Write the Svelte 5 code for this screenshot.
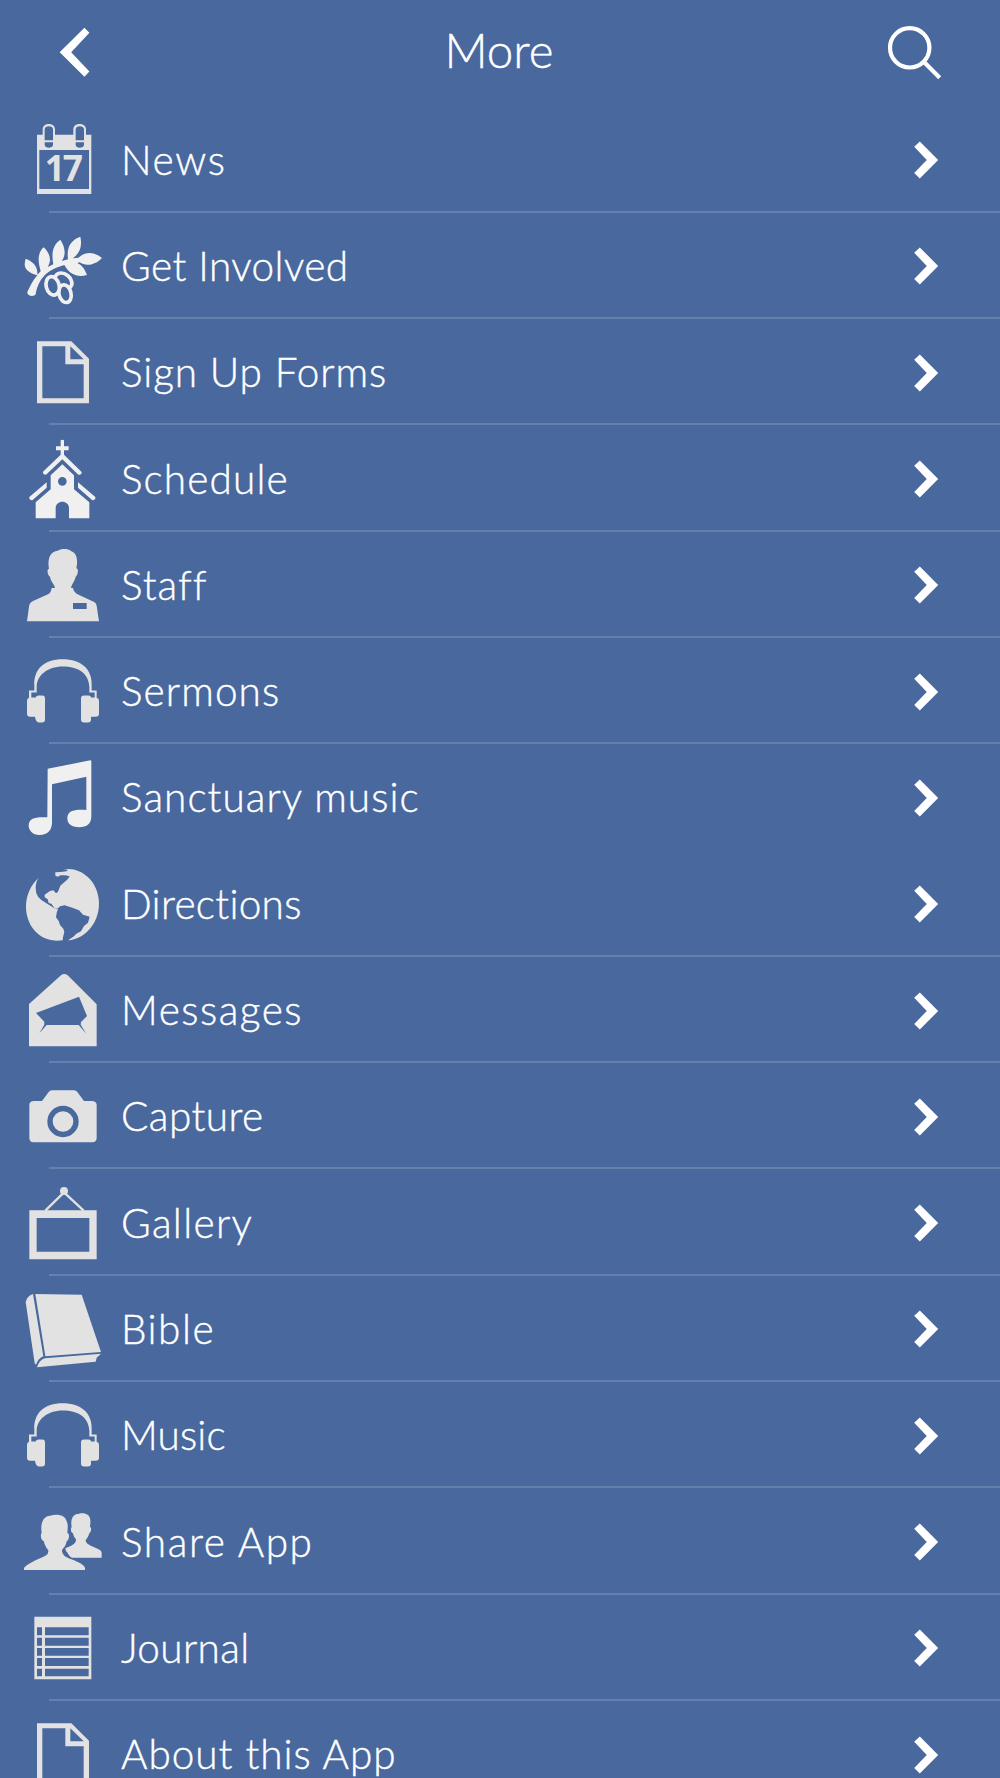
<script lang="ts">
    type Item = { label: string; icon: string; spacing: number };

    const items: Item[] = [
        { label: "News", icon: "calendar", spacing: 1.6 },
        { label: "Get Involved", icon: "olive", spacing: 0.45 },
        { label: "Sign Up Forms", icon: "page", spacing: 0.9 },
        { label: "Schedule", icon: "church", spacing: 1.15 },
        { label: "Staff", icon: "person", spacing: 1 },
        { label: "Sermons", icon: "headphones", spacing: 1.1 },
        { label: "Sanctuary music", icon: "note", spacing: 1.05 },
        { label: "Directions", icon: "globe", spacing: 0.3 },
        { label: "Messages", icon: "mail", spacing: 1.5 },
        { label: "Capture", icon: "camera", spacing: 0.45 },
        { label: "Gallery", icon: "frame", spacing: 1.35 },
        { label: "Bible", icon: "book", spacing: 1.5 },
        { label: "Music", icon: "headphones", spacing: 0.15 },
        { label: "Share App", icon: "people", spacing: 1.6 },
        { label: "Journal", icon: "journal", spacing: 0.35 },
        { label: "About this App", icon: "page", spacing: 1 },
    ];

    // Every icon is drawn on a 252 unit square
    const viewBoxes: Record<string, string> = {
        calendar: "30 21 252 252",
        olive: "30 340 252 252",
        page: "30 29 252 252",
        church: "30 348 252 252",
        person: "30 37 252 252",
        headphones: "30 355.5 252 252",
        note: "30 44 252 252",
        globe: "30 363 252 252",
        mail: "30 22 252 252",
        camera: "30 341 252 252",
        frame: "30 30 252 252",
        book: "30 349 252 252",
        people: "30 27 252 252",
        journal: "30 346 252 252",
    };

    const bright = ["olive", "church", "note"];
</script>

<div class="screen">
    <header>
        <button aria-label="Back">
            <svg width="34" height="52" viewBox="0 0 34 52">
                <path d="M28.4 1.7 33.4 6.8 15.2 26.2 33.4 45.6 28.4 50.8 3.7 26.2Z" />
            </svg>
        </button>
        <h1>More</h1>
        <button aria-label="Search">
            <svg width="56" height="56" viewBox="0 0 56 56" class="search">
                <circle cx="23.7" cy="23.8" r="19.7" />
                <path d="M38 38 53.7 53.7" />
            </svg>
        </button>
    </header>

    <ul>
        {#each items as item}
            <li class:last={item.label === "Sanctuary music"}>
                <svg
                    class="icon"
                    class:bright={bright.includes(item.icon)}
                    viewBox={viewBoxes[item.icon]}
                >
                    {#if item.icon === "calendar"}
                        <path
                            fill-rule="evenodd"
                            d="M81 71H98V55C98 34 135 34 135 55V71H190V55C190 34 228 34 228 55V71H244V249H81ZM88 117V234H237V117ZM104 88H129V55C129 43 104 43 104 55ZM197 88H222V55C222 43 197 43 197 55ZM104 94V101C104 113 129 113 129 101V94ZM197 94V101C197 113 222 113 222 101V94Z"
                        />
                        <text x="104 158" y="210">17</text>
                    {:else if item.icon === "olive"}
                        <path
                            d="M52 544C61 525 70 507 82 494C38 480 42 462 47 444C68 452 84 466 82 492L92 482C82 447 84 425 101 410C120 428 126 448 113 469L130 461C123 425 130 401 151 387C168 412 167 437 155 451L174 446C169 411 181 389 211 378C217 405 211 428 188 443L205 441C225 423 251 422 276 442C256 464 226 468 209 455L202 457C217 464 225 477 231 493C202 501 178 491 163 463C112 477 86 502 77 551C72 560 50 557 52 544Z"
                        />
                        <g class="ring">
                            <ellipse cx="160" cy="511" rx="28" ry="21" transform="rotate(38 160 511)" />
                            <ellipse cx="165" cy="549" rx="18" ry="27" transform="rotate(-14 165 549)" />
                            <ellipse cx="128" cy="525.5" rx="19.5" ry="28" transform="rotate(-14 128 525.5)" />
                        </g>
                    {:else if item.icon === "page"}
                        <path
                            fill-rule="evenodd"
                            d="M81 63H184L237 115V249H81ZM97 78V234H221V132H166V78ZM181 78V117H221Z"
                        />
                    {:else if item.icon === "church"}
                        <path
                            d="M152 358Q157 354 162 358V376H176V388H162V401L215 453Q215 463 205 461L157 415 108 461Q98 461 99 452L152 401V388H138V376H152Z"
                        />
                        <path d="M110 484V500L67 538Q56 537 58 528ZM204 484V500L247 538Q258 537 256 528Z" />
                        <path
                            fill-rule="evenodd"
                            d="M157 430 192 463V505L238 544V592H177V562C177 536 137 536 137 562V592H77V544L122 505V463ZM157 468A13 13 0 1 0 157 494A13 13 0 1 0 157 468Z"
                        />
                    {:else if item.icon === "person"}
                        <path
                            fill-rule="evenodd"
                            d="M117 115C111 80 123 62 143 60C153 54 173 53 183 61C200 66 205 89 199 113C206 113 205 133 197 138C194 153 185 160 183 172H189C191 182 196 186 201 190L246 211Q258 215 260 225L267 272H51L57 228Q58 216 69 211L114 191C122 187 123 180 125 172H135C133 159 122 153 120 138C112 134 110 113 117 115ZM189 217V235H230V217Z"
                        />
                    {:else if item.icon === "headphones"}
                        <path
                            fill-rule="evenodd"
                            d="M57 502V480H73V467C70 415 103 386 158 386C213 386 248 415 245 467V480H260V502Q267 503 267 511V550Q267 559 257 559H243V569Q242 576 234 576H222Q213 576 213 567V504Q213 495 222 495H236Q243 495 243 501H254V486H238V468C236 428 204 408 158 408C112 408 81 435 80 468V486H64V501H77Q78 495 86 495H97Q105 495 105 504V567Q105 576 96 576H86Q77 575 75 559H60Q51 559 51 550V511Q51 504 57 502Z"
                        />
                    {:else if item.icon === "note"}
                        <path
                            d="M113 85 241 60Q244 60 244 64V228C244 250 231 261 207 261C184 261 172 250 172 234C172 211 192 207 229 209V109L126 132V246C126 270 113 284 89 284C67 284 56 269 56 256C56 234 74 229 112 231Z"
                        />
                    {:else if item.icon === "globe"}
                        <path
                            d="M86 410C37 455 38 528 75 570C96 594 125 602 158 598L159 589L163 573L160 563L150 552L146 540L138 529L140 516L144 503L137 504L108 486Q76 470 77 441Q77 422 86 410Z"
                        />
                        <path
                            d="M162 385C207 376 260 414 266 473C274 535 232 594 174 598L190 587L199 578L213 571L222 555L234 545L239 527L219 521L207 508L187 500L164 493L150 496L144 502L135 503L124 488L116 486L113 475L104 469V461L120 450L130 448L138 457L144 452L151 434L173 415L179 406L166 403L151 403L144 407L136 404V394L153 393L170 391L174 386Z"
                        />
                    {:else if item.icon === "mail"}
                        <path
                            fill-rule="evenodd"
                            d="M57 130 153 44Q162 36 173 44L260 131V257H57ZM78 157 103 183 103 192 88 218 110 193H206L229 219 212 192 213 184 231 166 207 108Z"
                        />
                    {:else if item.icon === "camera"}
                        <path
                            d="M70 422H96L116 395Q119 390 126 390H192Q199 390 202 395L222 422H247Q260 423 260 435V533Q260 545 247 546H70Q58 545 58 533V435Q58 423 70 422Z"
                        />
                        <circle class="lens" cx="159" cy="483.5" r="39" />
                    {:else if item.icon === "frame"}
                        <path fill-rule="evenodd" d="M58 118H260V265H58ZM80 141V242H238V141Z" />
                        <circle cx="162" cy="60" r="12" />
                        <path class="wire" d="M106 119 162 64 221 119" />
                    {:else if item.icon === "book"}
                        <path d="M76 370 215 372 273 544 106 557Z" />
                        <path d="M69 370 100 557Q85 563 78 582L74 578 47 394Q51 376 69 370Z" />
                        <path d="M81 590Q87 569 104 563L273 549 260 561 257 573Z" />
                    {:else if item.icon === "people"}
                        <path
                            d="M42 237V231C50 219 82 206 97 199C112 193 115 189 115 178C108 170 104 161 101 150C93 149 90 130 95 126C90 93 102 75 120 74C144 68 165 72 170 91C175 102 173 113 172 126C180 126 178 148 170 151C168 164 162 169 156 177C156 192 166 198 184 205C207 214 223 222 225 231V237Z"
                        />
                        <path
                            d="M186 200C174 195 175 185 168 181L166 172C180 165 199 160 198 145C192 139 190 132 189 127C182 125 181 112 185 108C180 80 192 68 207 68C224 64 240 70 241 87C242 97 240 101 240 108C246 108 244 125 237 128C236 136 232 140 227 147C227 158 237 162 251 168C266 174 275 179 275 185V200Z"
                        />
                    {:else if item.icon === "journal"}
                        <path
                            fill-rule="evenodd"
                            d="M73 378H244V566H73ZM81 410V434H96V410ZM105 410V434H236V410ZM81 441V465H96V441ZM105 441V465H236V441ZM81 472V495H96V472ZM105 472V495H236V472ZM81 502V526H96V502ZM105 502V526H236V502ZM81 534V557H96V534ZM105 534V557H236V534Z"
                        />
                    {/if}
                </svg>
                <span style:letter-spacing="{item.spacing}px">{item.label}</span>
                <svg class="chevron" width="26" height="38" viewBox="0 0 26 38">
                    <path d="M6.8 .4 25.2 19 6.8 37.4 1.2 32 13.8 19 1.2 5.8Z" />
                </svg>
            </li>
        {/each}
    </ul>
</div>

<style>
    :global(body) {
        background-color: #48689e;
    }

    .screen {
        height: 1778px;
        overflow: hidden;
        background-color: #48689e;
        color: #fff;
        font-family: Lato, "Open Sans", sans-serif;
        font-weight: 300;
    }

    header {
        display: flex;
        align-items: center;
        justify-content: space-between;
        box-sizing: border-box;
        height: 106.5px;
        padding: 0 58px 1.6px 56px;
    }

    button {
        display: flex;
        width: 56px;
        padding: 0;
        border: none;
        background: none;
        cursor: pointer;
    }

    header svg {
        fill: #fff;
    }

    header .search {
        fill: none;
        stroke: #fff;
        stroke-width: 4.2;
    }

    h1 {
        margin: 0 0 4px;
        font-size: 47.5px;
        font-weight: 300;
        line-height: 58px;
        -webkit-text-stroke: 0.4px #fff;
    }

    ul {
        margin: 0;
        padding: 0;
        list-style: none;
    }

    li {
        display: flex;
        align-items: center;
        box-sizing: border-box;
        height: 106.3px;
        padding: 0 61px 0 20px;
        background: linear-gradient(#6680ae, #6680ae) 48.5px 100% / 100% 2px no-repeat;
    }

    li.last {
        background: none;
    }

    .icon {
        width: 84px;
        height: 84px;
        margin-right: 17px;
        fill: #e2e2e2;
    }

    .bright {
        fill: #f0f0f0;
    }

    .icon text {
        font-family: "Open Sans", sans-serif;
        font-size: 106px;
        font-weight: 700;
    }

    .ring {
        fill: #48689e;
        stroke: #f0f0f0;
        stroke-width: 11;
    }

    .lens {
        fill: none;
        stroke: #48689e;
        stroke-width: 16;
    }

    .wire {
        fill: none;
        stroke: #e2e2e2;
        stroke-width: 7;
    }

    span {
        flex: 1;
        font-size: 40.5px;
        line-height: 50px;
        white-space: nowrap;
        -webkit-text-stroke: 0.4px #fff;
    }

    .chevron {
        fill: #fff;
        margin-top: 1px;
    }
</style>
